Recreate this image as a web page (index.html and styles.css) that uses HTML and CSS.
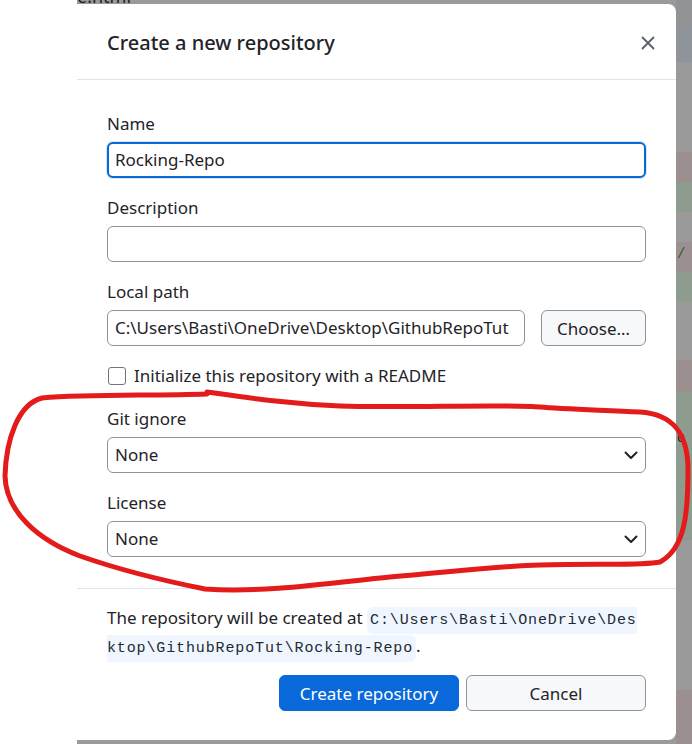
FILE: index.html
```html
<!DOCTYPE html>
<html lang="en">
<head>
<meta charset="utf-8">
<title>Create a new repository</title>
<link rel="stylesheet" href="styles.css">
</head>
<body>
<div class="screen">
  <div class="gutter"></div>
  <div class="backdrop">
    <div class="topstrip"><span class="filename">e.html</span></div>
    <div class="stage">
      <div class="dialog">
        <div class="dialog-header">
          <h1 class="title">Create a new repository</h1>
          <button class="close" aria-label="Close">
            <svg width="16" height="16" viewBox="0 0 16 16"><path d="M2.5 2.5 L13.5 13.5 M13.5 2.5 L2.5 13.5" stroke="#57606a" stroke-width="1.8" stroke-linecap="round" fill="none"/></svg>
          </button>
        </div>
        <div class="dialog-body">
          <div class="field">
            <label class="label">Name</label>
            <div class="input focused">Rocking-Repo</div>
          </div>
          <div class="field">
            <label class="label">Description</label>
            <div class="input"></div>
          </div>
          <div class="field">
            <label class="label">Local path</label>
            <div class="path-row">
              <div class="input grow">C:\Users\Basti\OneDrive\Desktop\GithubRepoTut</div>
              <button class="btn choose">Choose…</button>
            </div>
          </div>
          <div class="check-row">
            <span class="checkbox"></span>
            <span class="check-label">Initialize this repository with a README</span>
          </div>
          <div class="field">
            <label class="label">Git ignore</label>
            <div class="input select">None
              <svg class="chev" width="14" height="9" viewBox="0 0 14 9"><path d="M1.5 1.5 L7 7 L12.5 1.5" stroke="#1f2328" stroke-width="2" fill="none" stroke-linecap="round" stroke-linejoin="round"/></svg>
            </div>
          </div>
          <div class="field last">
            <label class="label">License</label>
            <div class="input select">None
              <svg class="chev" width="14" height="9" viewBox="0 0 14 9"><path d="M1.5 1.5 L7 7 L12.5 1.5" stroke="#1f2328" stroke-width="2" fill="none" stroke-linecap="round" stroke-linejoin="round"/></svg>
            </div>
          </div>
        </div>
        <div class="dialog-footer">
          <p class="summary">The repository will be created at <code class="code">C:\Users\Basti\OneDrive\Desktop\GithubRepoTut\Rocking-Repo</code>.</p>
          <div class="actions">
            <button class="btn primary">Create repository</button>
            <button class="btn secondary">Cancel</button>
          </div>
        </div>
      </div>
      <div class="side">
        <div class="band b-dark"></div>
        <div class="band b-blue"></div>
        <div class="band b-gray h90"></div>
        <div class="band b-red h30"></div>
        <div class="band b-green h30"></div>
        <div class="band b-gray h30"></div>
        <div class="band b-red h30"><span class="glyph">/</span></div>
        <div class="band b-green h30"></div>
        <div class="band b-gray h58"></div>
        <div class="band b-red h32"></div>
        <div class="band b-green h148"><span class="glyph dark">c</span></div>
        <div class="band b-gray h150"></div>
        <div class="band b-red fill"></div>
      </div>
    </div>
  </div>
</div>
<svg class="annotation" width="692" height="744" viewBox="0 0 692 744">
  <path d="M207 394 C150 396 90 394 42 398 C18 404 6 440 5 476 C6 512 38 540 80 556 C120 570 160 580 205 589 C265 593 330 583 390 577 C450 572 500 566 540 565 C600 563 640 566 660 562 C686 548 688 510 688 470 C688 432 672 414 640 412 C600 410 562 409 540 407 C510 404 400 408 340 406 C290 404 250 398 207 392" stroke="#e31b1b" stroke-width="5" fill="none" stroke-linecap="round" stroke-linejoin="round"/>
</svg>
</body>
</html>
```
FILE: styles.css
```css
* { box-sizing: border-box; }
html, body { margin: 0; padding: 0; }
body {
  width: 692px;
  height: 744px;
  overflow: hidden;
  background: #ffffff;
  font-family: "Noto Sans", "Segoe UI", sans-serif;
  color: #1f2328;
  position: relative;
}
.screen {
  display: flex;
  width: 692px;
  height: 744px;
}
.gutter { width: 77px; flex: none; background: #fff; }
.backdrop {
  flex: 1;
  display: flex;
  flex-direction: column;
  background: #9a9a9a;
}
.topstrip {
  height: 4px;
  flex: none;
  overflow: hidden;
  position: relative;
}
.filename {
  display: block;
  font-family: "Noto Sans", sans-serif;
  font-size: 18px;
  line-height: 16px;
  margin-top: -12px;
  color: #222;
}
.stage {
  flex: 1;
  display: flex;
  min-height: 0;
}
.dialog {
  width: 599px;
  flex: none;
  height: 736px;
  background: #ffffff;
  border-radius: 0 8px 8px 0;
  display: flex;
  flex-direction: column;
}
.dialog-header {
  height: 76px;
  flex: none;
  display: flex;
  align-items: center;
  justify-content: space-between;
  padding: 2px 17px 0 30px;
  border-bottom: 1px solid #e1e4e8;
}
.title {
  margin: 0;
  font-size: 20px;
  font-weight: 500;
  line-height: 28px;
  color: #1f2328;
}
.close {
  border: 0;
  background: none;
  padding: 0;
  width: 22px;
  height: 22px;
  display: flex;
  align-items: center;
  justify-content: center;
}
.dialog-body {
  padding: 32px 30px 31px 30px;
  border-bottom: 1px solid #e1e4e8;
}
.field { margin-bottom: 18px; }
.field.last { margin-bottom: 0; }
.label {
  display: block;
  font-size: 17px;
  line-height: 24px;
  margin-bottom: 6px;
  color: #1f2328;
}
.input {
  height: 36px;
  border: 1px solid #8c959f;
  border-radius: 6px;
  padding: 0 7px;
  font-size: 17px;
  line-height: 34px;
  color: #1f2328;
  background: #fff;
  white-space: nowrap;
  overflow: hidden;
}
.input.focused {
  border: 2px solid #0969da;
  line-height: 32px;
  padding: 0 6px;
  box-shadow: 0 0 0 1px rgba(9, 105, 218, 0.18);
}
.path-row {
  display: flex;
  gap: 16px;
}
.grow { flex: 1; }
.select {
  display: flex;
  align-items: center;
  justify-content: space-between;
  padding-right: 7px;
}
.chev { flex: none; }
.btn {
  font-family: inherit;
  font-size: 17px;
  height: 36px;
  border-radius: 6px;
  border: 1px solid #8c959f;
  background: #f6f8fa;
  color: #1f2328;
  padding: 0;
}
.choose { width: 105px; flex: none; }
.check-row {
  display: flex;
  align-items: center;
  gap: 8px;
  height: 24px;
  margin-bottom: 19px;
}
.checkbox {
  width: 18px;
  height: 18px;
  margin-left: 1px;
  border: 1.5px solid #6e7781;
  border-radius: 3px;
  background: #fff;
}
.check-label {
  font-size: 17px;
  line-height: 24px;
}
.dialog-footer {
  padding: 15px 30px 0 30px;
}
.summary {
  margin: 0;
  font-size: 17px;
  line-height: 28px;
  color: #1f2328;
}
.code {
  font-family: "Liberation Mono", monospace;
  font-size: 15px;
  line-height: 18px;
  letter-spacing: 0.87px;
  background: #eff6ff;
  padding: 5px 3px;
  border-radius: 6px;
  color: #24292f;
  word-break: break-all;
}
.actions {
  display: flex;
  justify-content: flex-end;
  gap: 7px;
  margin-top: 15px;
}
.primary {
  width: 180px;
  background: #0969da;
  border-color: #0969da;
  color: #fff;
}
.secondary {
  width: 180px;
}
.side {
  flex: 1;
  display: flex;
  flex-direction: column;
  margin-top: -4px;
}
.band { flex: none; position: relative; overflow: hidden; }
.b-dark { height: 26px; background: #919395; }
.b-blue { height: 36px; background: #8f949a; }
.b-gray { background: #9a9a9a; }
.b-red { background: #9c8f8f; }
.b-green { background: #8e9b8f; }
.h30 { height: 30px; }
.h32 { height: 32px; }
.h58 { height: 58px; }
.h90 { height: 90px; }
.h148 { height: 148px; }
.h150 { height: 150px; }
.fill { flex: 1; }
.glyph {
  position: absolute;
  left: 1px;
  top: 4px;
  font-family: "Liberation Mono", monospace;
  font-size: 14px;
  color: #1d5e2a;
}
.glyph.dark { color: #222; top: 38px; }
.annotation {
  position: absolute;
  left: 0;
  top: 0;
  pointer-events: none;
}
```
